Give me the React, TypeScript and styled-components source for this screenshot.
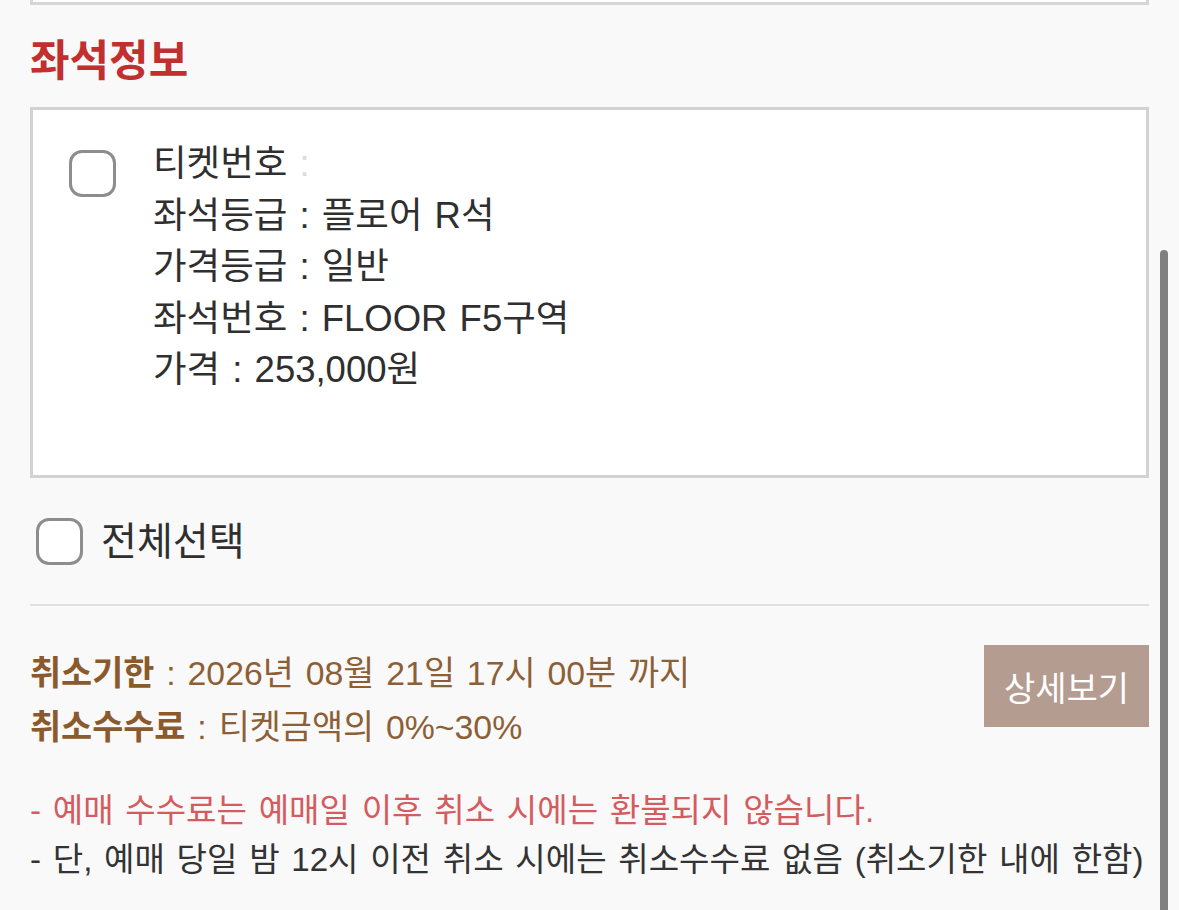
import styled, { createGlobalStyle } from 'styled-components';

const GlobalStyle = createGlobalStyle`
  html, body {
    margin: 0;
    padding: 0;
    background: #f9f9f9;
  }
  body {
    font-family: 'Liberation Sans', 'Noto Sans CJK KR', sans-serif;
    color: #333;
  }
`;

const Page = styled.div`
  position: relative;
  height: 910px;
  overflow: hidden;
  padding: 0 30px;
  box-sizing: border-box;
`;

const PrevCard = styled.div`
  height: 2px;
  border: 3px solid #d6d6d6;
  border-top: none;
  background: #fff;
`;

const Title = styled.h2`
  margin: 28px 0 0;
  font-size: 43px;
  line-height: 48px;
  font-weight: 700;
  color: #c1302e;
  font-family: 'Noto Sans CJK KR', sans-serif;
`;

const SeatCard = styled.div`
  margin-top: 26px;
  height: 371px;
  box-sizing: border-box;
  border: 3px solid #d2d2d2;
  background: #fff;
  display: flex;
  align-items: flex-start;
  column-gap: 37px;
  padding: 28px 36px;
`;

const CheckBox = styled.span<{ $offset?: number }>`
  flex: none;
  width: 47px;
  height: 47px;
  box-sizing: border-box;
  border: 3px solid #8d8d8d;
  border-radius: 13px;
  background: #fff;
  margin-top: ${({ $offset }) => $offset ?? 0}px;
`;

const InfoList = styled.ul`
  margin: 0;
  padding: 0;
  list-style: none;
  font-size: 36.5px;
  line-height: 51.5px;
  word-spacing: 2px;
  color: #2f2f2f;
`;

const Masked = styled.span`
  color: #dcdcdc;
`;

const SelectAll = styled.label`
  margin-top: 40px;
  display: flex;
  align-items: center;
  column-gap: 18px;
  padding-left: 6px;
  font-size: 39px;
  line-height: 47px;
  color: #2f2f2f;
`;

const Divider = styled.hr`
  margin: 39px 0 0;
  border: none;
  height: 2px;
  background: #e0e0e0;
`;

const CancelSection = styled.div`
  margin-top: 40px;
  display: flex;
  justify-content: space-between;
  align-items: flex-start;
`;

const CancelLines = styled.div`
  font-size: 33.8px;
  line-height: 54px;
  word-spacing: 2.5px;
  color: #8d5f36;
`;

const CancelLabel = styled.b`
  font-weight: 700;
  color: #8a5a2c;
`;

const DetailButton = styled.button`
  margin-top: -1px;
  width: 165px;
  height: 82px;
  border: none;
  background: #b49c90;
  color: #fff;
  font-family: inherit;
  font-size: 34px;
`;

const Notes = styled.div`
  margin-top: 32px;
  font-size: 33.1px;
  line-height: 49px;
  word-spacing: 2.5px;
`;

const Note = styled.p<{ $warn?: boolean }>`
  margin: 0;
  color: ${({ $warn }) => ($warn ? '#d45b5e' : '#333')};
`;

const ScrollThumb = styled.div`
  position: absolute;
  right: 11px;
  top: 250px;
  width: 8px;
  height: 700px;
  border-radius: 4px;
  background: #808080;
`;

const seatInfo = [
  ['좌석등급', '플로어 R석'],
  ['가격등급', '일반'],
  ['좌석번호', 'FLOOR F5구역'],
  ['가격', '253,000원'],
];

export default function App() {
  return (
    <Page>
      <GlobalStyle />
      <PrevCard />
      <Title>좌석정보</Title>
      <SeatCard>
        <CheckBox $offset={12} />
        <InfoList>
          <li>
            티켓번호 <Masked>:</Masked>
          </li>
          {seatInfo.map(([label, value]) => (
            <li key={label}>{`${label} : ${value}`}</li>
          ))}
        </InfoList>
      </SeatCard>
      <SelectAll>
        <CheckBox />
        전체선택
      </SelectAll>
      <Divider />
      <CancelSection>
        <CancelLines>
          <div>
            <CancelLabel>취소기한</CancelLabel> : 2026년 08월 21일 17시 00분 까지
          </div>
          <div>
            <CancelLabel>취소수수료</CancelLabel> : 티켓금액의 0%~30%
          </div>
        </CancelLines>
        <DetailButton>상세보기</DetailButton>
      </CancelSection>
      <Notes>
        <Note $warn>- 예매 수수료는 예매일 이후 취소 시에는 환불되지 않습니다.</Note>
        <Note>- 단, 예매 당일 밤 12시 이전 취소 시에는 취소수수료 없음 (취소기한 내에 한함)</Note>
      </Notes>
      <ScrollThumb />
    </Page>
  );
}
